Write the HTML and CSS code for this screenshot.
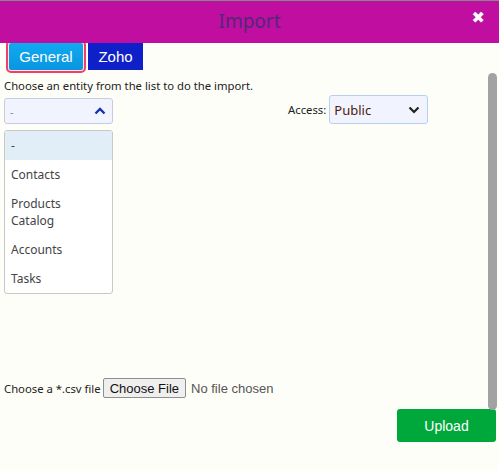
FILE: index.html
```html
<!DOCTYPE html>
<html>
<head>
<meta charset="utf-8">
<link rel="stylesheet" href="styles.css">
</head>
<body>
<div class="dialog">
  <div class="header">
    <span class="title">Import</span>
    <span class="close">&#10006;</span>
  </div>
  <div class="tabs">
    <span class="tab tab-general">General</span>
    <span class="tab tab-zoho">Zoho</span>
  </div>
  <div class="content">
    <div class="hint">Choose an entity from the list to do the import.</div>
    <div class="entity-row">
      <div class="entity-col">
        <div class="select entity-select">
          <span class="select-value">-</span>
          <svg class="chev" width="12" height="8" viewBox="0 0 12 8"><polyline points="1.5,6.5 6,2 10.5,6.5" fill="none" stroke="#1530b0" stroke-width="2.4"/></svg>
        </div>
        <div class="listbox">
          <div class="item active">-</div>
          <div class="item">Contacts</div>
          <div class="item">Products Catalog</div>
          <div class="item">Accounts</div>
          <div class="item">Tasks</div>
        </div>
      </div>
      <div class="access">
        <span class="access-label">Access:</span>
        <div class="select access-select">
          <span class="select-value">Public</span>
          <svg class="chev" width="12" height="8" viewBox="0 0 12 8"><polyline points="1.5,1.5 6,6 10.5,1.5" fill="none" stroke="#222" stroke-width="2.2"/></svg>
        </div>
      </div>
    </div>
    <div class="file-row">
      <span class="file-label">Choose a *.csv file</span>
      <span class="file-btn">Choose File</span>
      <span class="file-none">No file chosen</span>
    </div>
    <div class="upload-row">
      <span class="upload">Upload</span>
    </div>
  </div>
  <div class="scrollbar"></div>
</div>
</body>
</html>
```
FILE: styles.css
```css
html, body {
  margin: 0;
  padding: 0;
  background: #fefef8;
}
body {
  font-family: "Noto Sans", "Open Sans", sans-serif;
  font-size: 11.3px;
  color: #222;
}
.dialog {
  position: relative;
  width: 499px;
  height: 471px;
  border-top: 1px solid #888;
  box-sizing: border-box;
}
.header {
  position: relative;
  height: 42px;
  background: #c00ea0;
  display: flex;
  align-items: center;
  justify-content: center;
}
.title {
  font-size: 19px;
  color: #50287a;
  margin-top: -2px;
}
.close {
  position: absolute;
  right: 14px;
  top: 7px;
  color: #fff;
  font-size: 16px;
  font-weight: bold;
  font-family: "DejaVu Sans", sans-serif;
}
.tabs {
  display: flex;
  padding-left: 9px;
  gap: 5px;
  height: 27px;
}
.tab {
  display: flex;
  align-items: center;
  justify-content: center;
  color: #fff;
  font-family: "Liberation Sans", Arial, sans-serif;
  font-size: 15px;
  height: 27px;
  box-sizing: border-box;
}
.tab-general {
  width: 74px;
  background: linear-gradient(#10aaf0, #0896e0);
  outline: 2px solid #f0406a;
  outline-offset: 1px;
  border-radius: 2px;
  box-shadow: 0 0 0 3px rgba(240,64,106,0.15);
}
.tab-zoho {
  width: 55px;
  background: #1020c8;
}
.content {
  padding: 0 4px;
}
.hint {
  margin-top: 8px;
  line-height: 16px;
  height: 16px;
}
.entity-row {
  display: flex;
  align-items: flex-start;
  margin-top: 1px;
}
.entity-col {
  width: 109px;
  padding-top: 3px;
}
.select {
  display: flex;
  align-items: center;
  justify-content: space-between;
  background: #f1f4fe;
  border: 1px solid #c8cce0;
  border-radius: 3px;
  box-sizing: border-box;
  padding: 0 6px 0 5px;
}
.entity-select {
  height: 26px;
  color: #888;
}
.access-select {
  width: 99px;
  height: 29px;
  border-color: #b8d0ee;
  font-size: 13px;
  color: #4a2010;
  padding-left: 4px;
  padding-right: 7px;
}
.listbox {
  margin-top: 6px;
  border: 1px solid #c8c8c8;
  border-radius: 3px;
  background: #fff;
  overflow: hidden;
}
.item {
  padding: 6px 12px 6px 6px;
  line-height: 17px;
  font-size: 12px;
  color: #444;
}
.item.active {
  background: #e1eef8;
}
.access {
  display: flex;
  align-items: center;
  margin-left: 175px;
}
.access-label {
  margin-right: 3px;
}
.file-row {
  display: flex;
  align-items: center;
  margin-top: 84px;
  height: 20px;
}
.file-label {
  margin-right: 2px;
}
.file-btn {
  font-family: "Liberation Sans", Arial, sans-serif;
  font-size: 13px;
  color: #111;
  background: #efefef;
  border: 1px solid #8f8f8f;
  border-radius: 2px;
  height: 20px;
  box-sizing: border-box;
  padding: 0 6px;
  display: flex;
  align-items: center;
}
.file-none {
  font-family: "Liberation Sans", Arial, sans-serif;
  font-size: 13px;
  color: #555;
  margin-left: 5px;
}
.upload-row {
  display: flex;
  justify-content: flex-end;
  margin-top: 11px;
}
.upload {
  width: 99px;
  height: 33px;
  background: #00a83c;
  border-radius: 3px;
  color: #fff;
  font-family: "Liberation Sans", Arial, sans-serif;
  font-size: 14px;
  display: flex;
  align-items: center;
  justify-content: center;
  margin-right: -1px;
}
.scrollbar {
  position: absolute;
  right: 2px;
  top: 72px;
  width: 9px;
  height: 337px;
  border-radius: 5px;
  background: #a2a2a2;
}
```
